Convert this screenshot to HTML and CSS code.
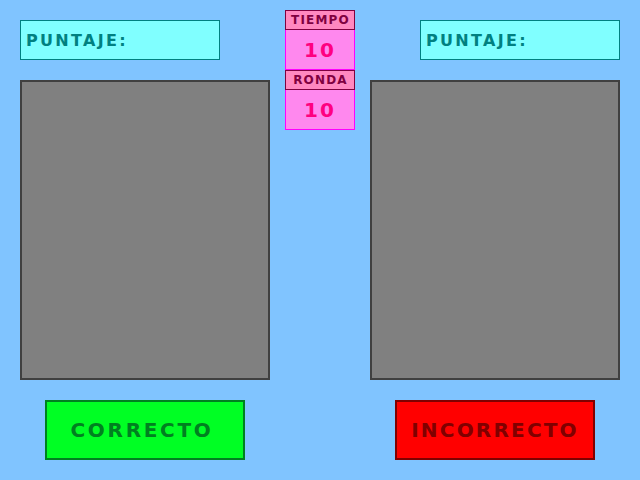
FILE: index.html
```html
<!DOCTYPE html>
<html>
    <head>
        <title>Juego</title>
        <link rel="stylesheet" href="styles.css">
    </head>
    <body>
        <div class="board">
            <div class="side left">
                <div class="score">PUNTAJE:</div>
                <div class="panel"></div>
                <div class="btn ok">CORRECTO</div>
            </div>

            <div class="middle">
                <div class="label">TIEMPO</div>
                <div class="value">10</div>
                <div class="label">RONDA</div>
                <div class="value">10</div>
            </div>

            <div class="side right">
                <div class="score">PUNTAJE:</div>
                <div class="panel"></div>
                <div class="btn bad">INCORRECTO</div>
            </div>
        </div>
    </body>
</html>
```

FILE: styles.css
```css
body{
    margin: 0;
    padding: 0;
    background-color: #80c4ff;
    font-family: "DejaVu Sans", sans-serif;
    font-weight: bold;
}

.board{
    width: 640px;
    height: 480px;
    box-sizing: border-box;
    padding: 10px 20px 0 20px;

    display: flex;
    gap: 15px;
    align-items: flex-start;
}

.side{
    width: 250px;
    padding-top: 10px;

    display: flex;
    flex-direction: column;
    gap: 20px;
}

.right{
    align-items: flex-end;
}

.score{
    width: 200px;
    height: 40px;
    box-sizing: border-box;
    background-color: #80ffff;
    border: 1px solid #008080;
    color: #008080;

    font-size: 16px;
    letter-spacing: 2.3px;
    padding-left: 5px;

    display: flex;
    align-items: center;
}

.panel{
    width: 250px;
    height: 300px;
    box-sizing: border-box;
    background-color: #808080;
    border: 2px solid #404040;
}

.btn{
    width: 200px;
    height: 60px;
    box-sizing: border-box;
    align-self: center;

    font-size: 20px;
    letter-spacing: 2.7px;

    display: flex;
    justify-content: center;
    align-items: center;
}

.btn.ok{
    background-color: #00ff24;
    border: 2px solid #008020;
    color: #008020;
    padding-right: 6px;
}

.btn.bad{
    background-color: #ff0000;
    border: 2px solid #800000;
    color: #800000;
    letter-spacing: 2.2px;
}

.middle{
    width: 70px;
    display: flex;
    flex-direction: column;
}

.label{
    height: 20px;
    box-sizing: border-box;
    background-color: #ff88c0;
    border: 1px solid #800040;
    color: #800040;
    font-size: 12px;
    letter-spacing: 1.2px;
    padding-left: 1px;

    display: flex;
    justify-content: center;
    align-items: center;
}

.value{
    height: 40px;
    box-sizing: border-box;
    background-color: #ff88ee;
    border: 1px solid #ff00ff;
    border-top: none;
    color: #ff0080;
    font-size: 20px;
    letter-spacing: 2px;

    display: flex;
    justify-content: center;
    align-items: center;
}
```
